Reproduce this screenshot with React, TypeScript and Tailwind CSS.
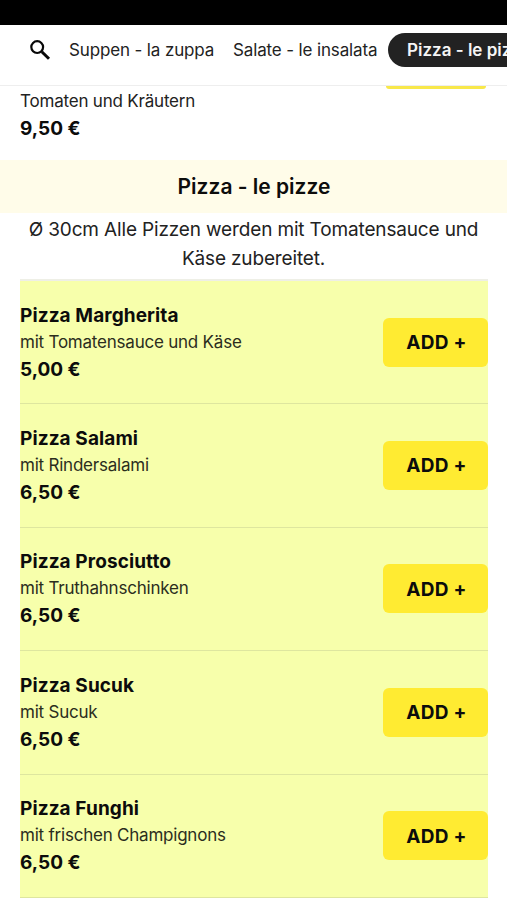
const items = [
  ["Pizza Margherita", "mit Tomatensauce und Käse", "5,00 €"],
  ["Pizza Salami", "mit Rindersalami", "6,50 €"],
  ["Pizza Prosciutto", "mit Truthahnschinken", "6,50 €"],
  ["Pizza Sucuk", "mit Sucuk", "6,50 €"],
  ["Pizza Funghi", "mit frischen Champignons", "6,50 €"],
];

export default function App() {
  return (
    <div className="h-[900px] w-[507px] overflow-hidden bg-white font-['Inter',sans-serif] text-[#0c0c0c]">
      <div className="h-[25px] bg-black" />
      <nav className="flex h-[61px] items-center overflow-hidden border-b border-[#eeeeee] pb-[10px] pl-[29px] text-[17px] tracking-[-0.14px] whitespace-nowrap text-[#222]">
        <svg className="h-[22px] w-[22px] shrink-0" viewBox="0 0 22 22" fill="none" stroke="#080808" strokeWidth="2.2">
          <circle cx="8.2" cy="8.1" r="5.9" />
          <path d="M12.8 12.7l7.2 7.1" strokeWidth="3" />
        </svg>
        <span className="ml-[18px] w-[144px] shrink-0 pt-[2px]">Suppen - la zuppa</span>
        <span className="ml-[20px] w-[145px] shrink-0 pt-[2px]">Salate - le insalata</span>
        <span className="ml-[10px] flex h-[34px] w-[160px] shrink-0 items-center rounded-full bg-[#222] pt-px pl-[19px] font-semibold tracking-normal text-[#f5f5f5]">Pizza - le pizze</span>
      </nav>
      <section className="flex h-[74px] justify-between pr-[21px] pl-5">
        <div className="pt-[3px]">
          <p className="text-[17px] leading-[25px] tracking-[-0.2px] text-[#222]">Tomaten und Kräutern</p>
          <p className="text-[19px] leading-[29px] font-bold">9,50 €</p>
        </div>
        <div className="h-[3px] w-[100px] rounded-b-md bg-[#f8e84a]" />
      </section>
      <h2 className="h-[53px] bg-[#fffce9] pl-px text-center text-[21px] leading-[53px] font-semibold">Pizza - le pizze</h2>
      <p className="h-[66px] pt-[2px] text-center text-[19px] leading-[29px] tracking-[-0.15px] text-[#222]">
        Ø 30cm Alle Pizzen werden mit Tomatensauce und<br />Käse zubereitet.
      </p>
      <main className="mr-[19px] ml-5 border-t-2 border-[#eeefe6] bg-[#f7ffab]">
        {items.map(([name, description, price]) => (
          <article key={name} className="flex h-[123.4px] items-center justify-between border-b border-[#dee69f]">
            <div className="pt-[2px]">
              <h3 className="text-[19px] leading-[26px] font-bold tracking-[0.1px]">{name}</h3>
              <p className="text-[17px] leading-[27px] tracking-[-0.22px] text-[#2b2d1d]">{description}</p>
              <p className="text-[19px] leading-[28px] font-bold">{price}</p>
            </div>
            <button className="h-[49px] w-[105px] rounded-md bg-[#ffeb32] pt-[2px] pl-[2px] text-[19px] font-bold tracking-[0.3px]">ADD +</button>
          </article>
        ))}
      </main>
    </div>
  );
}
